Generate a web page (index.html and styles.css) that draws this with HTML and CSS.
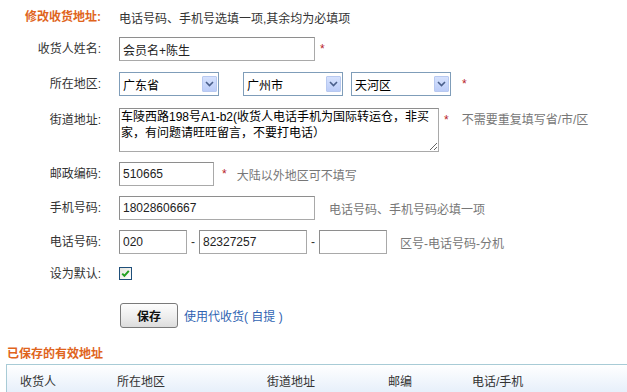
FILE: index.html
```html
<!DOCTYPE html>
<html lang="zh-CN">
<head>
<meta charset="utf-8">
<title>修改收货地址</title>
<link rel="stylesheet" href="styles.css">
</head>
<body>
<div class="page">
  <div class="row row-title">
    <div class="label title">修改收货地址:</div>
    <div class="note">电话号码、手机号选填一项,其余均为必填项</div>
  </div>

  <div class="row r1">
    <div class="label">收货人姓名:</div>
    <input class="field w-long" value="会员名+陈生">
    <span class="star s1">*</span>
  </div>

  <div class="row r2">
    <div class="label">所在地区:</div>
    <div class="select sel1"><span class="sel-text">广东省</span><span class="arrow"><svg width="9" height="6" viewBox="0 0 9 6"><path d="M1 1 L4.5 4.5 L8 1" fill="none" stroke="#4a5f8a" stroke-width="1.6"/></svg></span></div>
    <div class="select sel2"><span class="sel-text">广州市</span><span class="arrow"><svg width="9" height="6" viewBox="0 0 9 6"><path d="M1 1 L4.5 4.5 L8 1" fill="none" stroke="#4a5f8a" stroke-width="1.6"/></svg></span></div>
    <div class="select sel3"><span class="sel-text">天河区</span><span class="arrow"><svg width="9" height="6" viewBox="0 0 9 6"><path d="M1 1 L4.5 4.5 L8 1" fill="none" stroke="#4a5f8a" stroke-width="1.6"/></svg></span></div>
    <span class="star s2">*</span>
  </div>

  <div class="row r3">
    <div class="label top">街道地址:</div>
    <textarea class="area">车陵西路198号A1-b2(收货人电话手机为国际转运仓，非买家，有问题请旺旺留言，不要打电话）</textarea>
    <span class="star s3 top">*</span>
    <span class="hint h3 top">不需要重复填写省/市/区</span>
  </div>

  <div class="row r4">
    <div class="label">邮政编码:</div>
    <input class="field w-post" value="510665">
    <span class="star s4">*</span>
    <span class="hint h4">大陆以外地区可不填写</span>
  </div>

  <div class="row r5">
    <div class="label">手机号码:</div>
    <input class="field w-long" value="18028606667">
    <span class="hint h5">电话号码、手机号码必填一项</span>
  </div>

  <div class="row r6">
    <div class="label">电话号码:</div>
    <input class="field w-area" value="020">
    <span class="dash">-</span>
    <input class="field w-tel" value="82327257">
    <span class="dash">-</span>
    <input class="field w-area" value="">
    <span class="hint h6">区号-电话号码-分机</span>
  </div>

  <div class="row r7">
    <div class="label">设为默认:</div>
    <span class="check"><svg width="11" height="11" viewBox="0 0 11 11"><path d="M2.2 5.6 L4.4 7.8 L8.8 2.8" fill="none" stroke="#22a020" stroke-width="2"/></svg></span>
  </div>

  <div class="row r8">
    <div class="label"></div>
    <button class="btn">保存</button>
    <a class="link" href="#">使用代收货( 自提 )</a>
  </div>

  <div class="section-title">已保存的有效地址</div>

  <div class="table">
    <div class="thead">
      <div class="th">收货人</div>
      <div class="th">所在地区</div>
      <div class="th">街道地址</div>
      <div class="th">邮编</div>
      <div class="th">电话/手机</div>
    </div>
  </div>
</div>
</body>
</html>
```

FILE: styles.css
```css
html, body {
  margin: 0;
  padding: 0;
  background: #fff;
  overflow: hidden;
}
body {
  font-family: "Liberation Sans", "Noto Sans CJK SC", sans-serif;
  font-size: 12px;
  color: #333;
}
.page {
  width: 627px;
  display: flex;
  flex-direction: column;
}
.row {
  display: flex;
  align-items: center;
}
.label {
  width: 101px;
  margin-right: 18px;
  text-align: right;
  flex: none;
  line-height: 16px;
  color: #333;
}
.title {
  color: #e0641c;
  font-weight: bold;
}
.note {
  color: #333;
}
.row-title { height: 34px; }
.r1 { margin-top: 3px; height: 24px; }
.r2 { margin-top: 11px; height: 24px; }
.r3 { margin-top: 12px; align-items: flex-start; }
.r4 { margin-top: 10px; height: 24px; }
.r5 { margin-top: 10px; height: 24px; }
.r6 { margin-top: 10px; height: 24px; }
.r7 { margin-top: 13px; height: 13px; }
.r8 { margin-top: 23px; height: 25px; }

.top { padding-top: 4px; line-height: 16px; }

.field {
  box-sizing: border-box;
  height: 24px;
  margin: 0;
  padding: 0 3px;
  border: 1px solid #a9a9a9;
  border-top-color: #8e8e8e;
  border-left-color: #8e8e8e;
  font-family: "Liberation Sans", "Noto Sans CJK SC", sans-serif;
  font-size: 12px;
  color: #222;
  background: #fff;
  outline: none;
}
.w-long { width: 196px; }
.w-post { width: 95px; }
.w-area { width: 68px; }
.w-tel { width: 108px; }

.star {
  color: #b82228;
  font-size: 12px;
  line-height: 12px;
}
.s1 { margin-left: 5px; margin-top: -1px; }
.s2 { margin-left: 11px; margin-top: -1px; }
.s3 { margin-left: 5px; padding-top: 6px; }
.s4 { margin-left: 8px; margin-top: -1px; }

.hint { color: #777; }
.h3 { margin-left: 13px; }
.h4 { margin-left: 10px; }
.h5 { margin-left: 14px; }
.h6 { margin-left: 13px; }

.dash {
  width: 12px;
  text-align: center;
  color: #333;
}

.select {
  box-sizing: border-box;
  position: relative;
  width: 100px;
  height: 24px;
  border: 1px solid #7f9db9;
  background: #fff;
  display: flex;
  align-items: center;
  color: #000;
}
.sel-text { padding-left: 3px; }
.sel2 { margin-left: 24px; }
.sel3 { margin-left: 8px; }
.arrow {
  position: absolute;
  right: 1px;
  top: 3px;
  width: 15px;
  height: 16px;
  box-sizing: border-box;
  border: 1px solid #b8c9f0;
  border-radius: 1px;
  background: linear-gradient(#d6e2fd, #bccdf8);
  display: flex;
  align-items: center;
  justify-content: center;
}

.area {
  box-sizing: border-box;
  width: 320px;
  height: 44px;
  margin: 0;
  padding: 0 1px;
  border: 1px solid #a9a9a9;
  border-top-color: #8e8e8e;
  border-left-color: #8e8e8e;
  font-family: "Liberation Sans", "Noto Sans CJK SC", sans-serif;
  font-size: 12px;
  line-height: 16px;
  color: #000;
  overflow: hidden;
  resize: both;
  outline: none;
}

.check {
  box-sizing: border-box;
  width: 13px;
  height: 13px;
  border: 1px solid #1f4f7a;
  background: linear-gradient(135deg, #e4e4dd, #fff);
  display: flex;
  align-items: center;
  justify-content: center;
}

.btn {
  box-sizing: border-box;
  width: 58px;
  height: 25px;
  margin: 0 0 0 1px;
  padding: 0;
  border: 1px solid #7a7a7a;
  border-radius: 3px;
  background: linear-gradient(#fdfdfd, #ececec 60%, #dcdcdc);
  font-family: "Liberation Sans", "Noto Sans CJK SC", sans-serif;
  font-size: 12px;
  font-weight: bold;
  color: #111;
}
.link {
  margin-left: 6px;
  color: #2f63b2;
  text-decoration: none;
}

.section-title {
  margin-top: 17px;
  margin-left: 7px;
  height: 18px;
  line-height: 18px;
  color: #e0641c;
  font-weight: bold;
}
.table {
  margin-top: 1px;
  margin-left: 6px;
  width: 621px;
  border-top: 1px solid #a8cbd6;
  border-left: 1px solid #a8cbd6;
}
.thead {
  display: grid;
  grid-template-columns: 97px 150px 121px 84px 1fr;
  padding-left: 13px;
  height: 30px;
  align-items: center;
  background: linear-gradient(#ffffff, #f4f8fd 40%, #e4eefa);
}
.th {
  color: #333;
}
```
